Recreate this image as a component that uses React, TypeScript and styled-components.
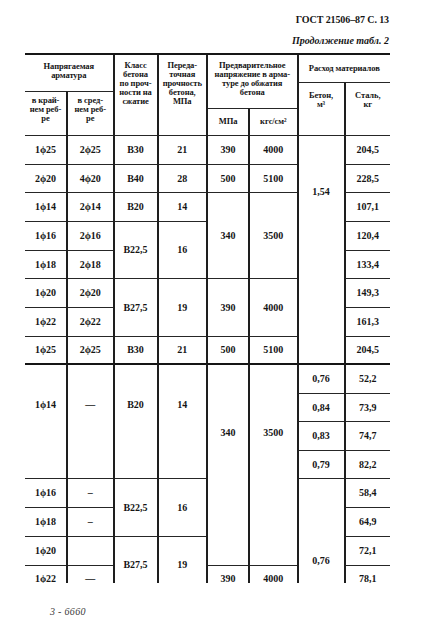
import React from "react";
import styled, { createGlobalStyle } from "styled-components";

const Global = createGlobalStyle`
  html, body { margin: 0; padding: 0; background: #ffffff; }
  body {
    width: 422px;
    height: 632px;
    overflow: hidden;
    font-family: "Liberation Serif", "Times New Roman", serif;
    color: #151515;
  }
`;

const Page = styled.div`
  width: 422px;
  height: 632px;
  box-sizing: border-box;
  padding: 13px 32px 0 25px;
  display: flex;
  flex-direction: column;
`;

const Heading = styled.header`
  display: flex;
  flex-direction: column;
  align-items: flex-end;
  padding-right: 1px;
`;

const Title = styled.div`
  font-weight: 700;
  font-size: 10px;
  line-height: 13px;
  letter-spacing: -0.1px;
`;

const Subtitle = styled.div`
  font-weight: 700;
  font-style: italic;
  font-size: 10px;
  line-height: 13px;
  margin-top: 8px;
`;

const TableClip = styled.div`
  margin-top: 6px;
  height: 530px;
  overflow: hidden;
`;

const Grid = styled.div`
  display: grid;
  grid-template-columns: 41px 46.5px 44px 49.5px 42px 48.5px 47px 46.5px;
  grid-template-rows:
    26.7px 9px 17px 27.3px
    29px 28.5px 28.5px 29px 28.5px 28.5px 29px 27.5px
    29.5px 28.5px 28.5px 28.5px 29px 29px 28.5px 28px;
  border-top: 2px solid #161616;
`;

type CellProps = {
  $c: number;
  $r: number;
  $cs?: number;
  $rs?: number;
  $thick?: boolean;
  $pt?: number;
};

const GridCell = styled.div<CellProps>`
  grid-column: ${(p) => p.$c} / span ${(p) => p.$cs ?? 1};
  grid-row: ${(p) => p.$r} / span ${(p) => p.$rs ?? 1};
  box-sizing: border-box;
  border-left: ${(p) => (p.$c === 1 ? "none" : "2px solid #1e1e1e")};
  border-top: ${(p) =>
    p.$r === 1 ? "none" : p.$thick ? "2px solid #151515" : "1px solid #262626"};
  display: flex;
  justify-content: center;
  text-align: center;
  min-width: 0;
  min-height: 0;
`;

const HeadCell = styled(GridCell)<{ $mid?: boolean }>`
  align-items: ${(p) => (p.$mid ? "center" : "flex-start")};
  padding-top: ${(p) => (p.$mid ? 0 : p.$pt ?? 6)}px;
  font-size: 8.5px;
  line-height: 9px;
  font-weight: 700;
  white-space: pre-line;
  letter-spacing: -0.1px;
`;

const DataCell = styled(GridCell)`
  align-items: ${(p) => (p.$pt !== undefined ? "flex-start" : "center")};
  padding-top: ${(p) => p.$pt ?? 0}px;
  font-size: 10px;
  line-height: 12px;
  font-weight: 700;
  white-space: nowrap;
`;

const Footer = styled.div`
  margin-top: 23px;
  padding-left: 25px;
  font-style: italic;
  font-size: 10px;
  line-height: 12px;
  color: #3a3a3a;
  letter-spacing: 0.3px;
`;

type Row = {
  r: number;
  c: number;
  t: string;
  cs?: number;
  rs?: number;
  thick?: boolean;
  pt?: number;
};

const P = "\u03d5";

// body row n (1..16) -> grid row n + 4
const body: Row[] = [
  // row 1
  { r: 1, c: 1, t: `1${P}25` },
  { r: 1, c: 2, t: `2${P}25` },
  { r: 1, c: 3, t: "В30" },
  { r: 1, c: 4, t: "21" },
  { r: 1, c: 5, t: "390" },
  { r: 1, c: 6, t: "4000" },
  { r: 1, c: 7, t: "1,54", rs: 8, pt: 50 },
  { r: 1, c: 8, t: "204,5" },
  // row 2
  { r: 2, c: 1, t: `2${P}20` },
  { r: 2, c: 2, t: `4${P}20` },
  { r: 2, c: 3, t: "В40" },
  { r: 2, c: 4, t: "28" },
  { r: 2, c: 5, t: "500" },
  { r: 2, c: 6, t: "5100" },
  { r: 2, c: 8, t: "228,5" },
  // row 3
  { r: 3, c: 1, t: `1${P}14` },
  { r: 3, c: 2, t: `2${P}14` },
  { r: 3, c: 3, t: "В20" },
  { r: 3, c: 4, t: "14" },
  { r: 3, c: 5, t: "340", rs: 3 },
  { r: 3, c: 6, t: "3500", rs: 3 },
  { r: 3, c: 8, t: "107,1" },
  // row 4
  { r: 4, c: 1, t: `1${P}16` },
  { r: 4, c: 2, t: `2${P}16` },
  { r: 4, c: 3, t: "В22,5", rs: 2 },
  { r: 4, c: 4, t: "16", rs: 2 },
  { r: 4, c: 8, t: "120,4" },
  // row 5
  { r: 5, c: 1, t: `1${P}18` },
  { r: 5, c: 2, t: `2${P}18` },
  { r: 5, c: 8, t: "133,4" },
  // row 6
  { r: 6, c: 1, t: `1${P}20` },
  { r: 6, c: 2, t: `2${P}20` },
  { r: 6, c: 3, t: "В27,5", rs: 2 },
  { r: 6, c: 4, t: "19", rs: 2 },
  { r: 6, c: 5, t: "390", rs: 2 },
  { r: 6, c: 6, t: "4000", rs: 2 },
  { r: 6, c: 8, t: "149,3" },
  // row 7
  { r: 7, c: 1, t: `1${P}22` },
  { r: 7, c: 2, t: `2${P}22` },
  { r: 7, c: 8, t: "161,3" },
  // row 8
  { r: 8, c: 1, t: `1${P}25` },
  { r: 8, c: 2, t: `2${P}25` },
  { r: 8, c: 3, t: "В30" },
  { r: 8, c: 4, t: "21" },
  { r: 8, c: 5, t: "500" },
  { r: 8, c: 6, t: "5100" },
  { r: 8, c: 8, t: "204,5" },
  // row 9 (second group)
  { r: 9, c: 1, t: `1${P}14`, rs: 4, thick: true, pt: 34 },
  { r: 9, c: 2, t: "—", rs: 4, thick: true, pt: 34 },
  { r: 9, c: 3, t: "В20", rs: 4, thick: true, pt: 34 },
  { r: 9, c: 4, t: "14", rs: 4, thick: true, pt: 34 },
  { r: 9, c: 5, t: "340", rs: 7, thick: true, pt: 62 },
  { r: 9, c: 6, t: "3500", rs: 7, thick: true, pt: 62 },
  { r: 9, c: 7, t: "0,76", thick: true },
  { r: 9, c: 8, t: "52,2", thick: true },
  // rows 10-12
  { r: 10, c: 7, t: "0,84" },
  { r: 10, c: 8, t: "73,9" },
  { r: 11, c: 7, t: "0,83" },
  { r: 11, c: 8, t: "74,7" },
  { r: 12, c: 7, t: "0,79" },
  { r: 12, c: 8, t: "82,2" },
  // row 13
  { r: 13, c: 1, t: `1${P}16` },
  { r: 13, c: 2, t: "–" },
  { r: 13, c: 3, t: "В22,5", rs: 2 },
  { r: 13, c: 4, t: "16", rs: 2 },
  { r: 13, c: 7, t: "0,76", rs: 4, pt: 76 },
  { r: 13, c: 8, t: "58,4" },
  // row 14
  { r: 14, c: 1, t: `1${P}18` },
  { r: 14, c: 2, t: "–" },
  { r: 14, c: 8, t: "64,9" },
  // row 15
  { r: 15, c: 1, t: `1${P}20` },
  { r: 15, c: 2, t: "" },
  { r: 15, c: 3, t: "В27,5", rs: 2 },
  { r: 15, c: 4, t: "19", rs: 2 },
  { r: 15, c: 8, t: "72,1" },
  // row 16
  { r: 16, c: 1, t: `1${P}22` },
  { r: 16, c: 2, t: "—" },
  { r: 16, c: 5, t: "390" },
  { r: 16, c: 6, t: "4000" },
  { r: 16, c: 8, t: "78,1" },
];

export default function App() {
  return (
    <>
      <Global />
      <Page>
        <Heading>
          <Title>ГОСТ 21506–87 С. 13</Title>
          <Subtitle>Продолжение табл. 2</Subtitle>
        </Heading>
        <TableClip>
          <Grid>
            <HeadCell $c={1} $r={1} $cs={2} $rs={2} $pt={7}>
              {"Напрягаемая\nарматура"}
            </HeadCell>
            <HeadCell $c={3} $r={1} $rs={4}>
              {"Класс\nбетона\nпо проч-\nности на\nсжатие"}
            </HeadCell>
            <HeadCell $c={4} $r={1} $rs={4}>
              {"Переда-\nточная\nпрочность\nбетона,\nМПа"}
            </HeadCell>
            <HeadCell $c={5} $r={1} $cs={2} $rs={3}>
              {"Предварительное\nнапряжение в арма-\nтуре до обжатия\nбетона"}
            </HeadCell>
            <HeadCell $c={7} $r={1} $cs={2} $mid>
              Расход материалов
            </HeadCell>
            <HeadCell $c={7} $r={2} $rs={3} $pt={8}>
              {"Бетон,\nм³"}
            </HeadCell>
            <HeadCell $c={8} $r={2} $rs={3} $pt={8}>
              {"Сталь,\nкг"}
            </HeadCell>
            <HeadCell $c={1} $r={3} $rs={2} $pt={4}>
              {"в край-\nнем реб-\nре"}
            </HeadCell>
            <HeadCell $c={2} $r={3} $rs={2} $pt={4}>
              {"в сред-\nнем реб-\nре"}
            </HeadCell>
            <HeadCell $c={5} $r={4} $mid>
              МПа
            </HeadCell>
            <HeadCell $c={6} $r={4} $mid>
              кгс/см²
            </HeadCell>
            {body.map((d, i) => (
              <DataCell
                key={i}
                $c={d.c}
                $r={d.r + 4}
                $cs={d.cs}
                $rs={d.rs}
                $thick={d.thick}
                $pt={d.pt}
              >
                {d.t}
              </DataCell>
            ))}
          </Grid>
        </TableClip>
        <Footer>3 - 6660</Footer>
      </Page>
    </>
  );
}
